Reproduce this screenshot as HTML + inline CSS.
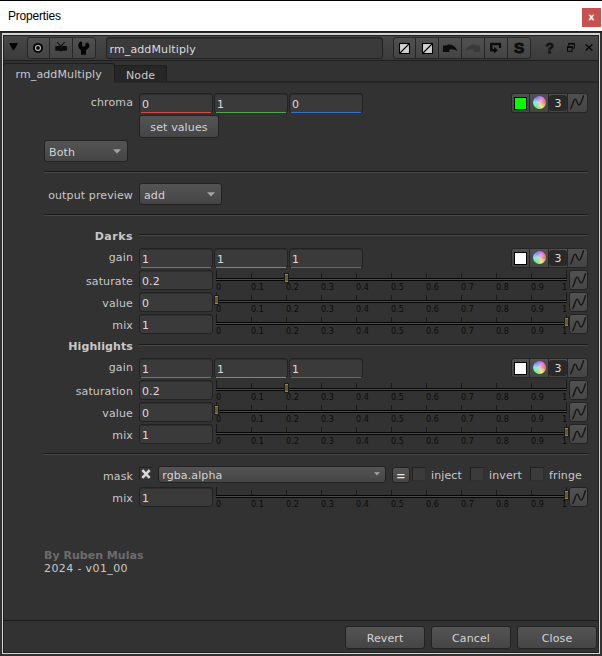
<!DOCTYPE html>
<html><head><meta charset="utf-8"><title>Properties</title>
<style>
*{box-sizing:border-box;margin:0;padding:0}
html,body{width:602px;height:656px;overflow:hidden;background:#323232}
body{position:relative;font-family:"DejaVu Sans","Liberation Sans",sans-serif;font-size:11px;color:#c8c8c8;line-height:13px;letter-spacing:0.12px}
.a{position:absolute}
.t{position:absolute;white-space:nowrap}
.titlebar{left:0;top:0;width:602px;height:31px;background:#fff;border-top:1px solid #000}
.title{left:8px;top:9px;letter-spacing:-0.2px;font-family:"Liberation Sans",sans-serif;font-size:12px;color:#000;line-height:14px}
.close{left:582px;top:8px;width:19px;height:19px;background:#c75050;color:#fff;font-family:"Liberation Sans",sans-serif;font-weight:bold;font-size:9.5px;line-height:18px;text-align:center;letter-spacing:0;-webkit-text-stroke:0.3px #fff}
.shadow{left:0;top:31px;width:602px;height:2px;background:linear-gradient(#1e1e1e,#2a2a2a)}
.frameL{left:2px;top:33px;width:598px;height:621px;border:1px solid #d2d2d2;border-top-width:2px}
.frameD{left:3px;top:35px;width:596px;height:618px;border:1px solid #202020}
.header{left:4px;top:36px;width:594px;height:24px;background:linear-gradient(#484848,#3a3a3a)}
.hline{left:4px;top:60px;width:594px;height:1px;background:#1e1e1e}
.grp{border:1px solid #262626;border-radius:3px;background:linear-gradient(#505050,#444)}
.sep{background:#262626;width:1px}
.tab1{left:3px;top:63px;width:112px;height:20px;border:1px solid #1e1e1e;border-bottom:none;border-radius:3px 3px 0 0;background:#323232}
.tab2{left:114px;top:65px;width:53px;height:17px;border:1px solid #1e1e1e;border-bottom:none;border-radius:0 3px 0 0;background:#262626}
.tabline{left:114px;top:81px;width:484px;height:2px;background:linear-gradient(#232323,#2a2a2a)}
.inp{position:absolute;height:20px;width:74px;background:#3a3a3a;border:1px solid #222;border-radius:3px;color:#dcdcdc;padding:4px 0 0 2px;box-shadow:inset 0 1px 0 #2e2e2e}
.inp i{position:absolute;left:1px;right:1px;bottom:-1px;height:1px}
.lbl{position:absolute;white-space:nowrap;text-align:right;width:120px;left:13px}
.btn{position:absolute;border:1px solid #222;border-radius:3px;background:linear-gradient(#545454,#454545);color:#d4d4d4;text-align:center}
.hr{position:absolute;height:1px;background:#1a1a1a;box-shadow:0 1px 0 #474747}
.tick{position:absolute;width:1px;background:#1a1a1a}
.tl{position:absolute;font-size:8px;line-height:9px;color:#0c0c0c;letter-spacing:0;white-space:nowrap}
.trk{position:absolute;left:216px;width:351px;height:3px;background:#4c4c4c;border-top:1px solid #060606;border-bottom:1px solid #060606}
.hdl{position:absolute;width:5px;height:10px;border:1px solid #1b1b1b;background:linear-gradient(#9c8839 0,#9c8839 1px,#685b2d 1px,#685b2d 7px,#9c8839 7px,#9c8839 8px)}
.cv{position:absolute;width:19px;height:20px;border:1px solid #222;border-radius:3px;background:linear-gradient(#525252,#464646)}
.cb{position:absolute;width:14px;height:14px;background:#3b3b3b;border:1px solid #202020;border-right-color:#303030;border-bottom-color:#303030}
</style></head>
<body>
<div class="a titlebar"></div>
<div class="t title">Properties</div>
<div class="a close">x</div>
<div class="a shadow"></div>
<div class="a frameL"></div>
<div class="a frameD"></div>
<div class="a header"></div>
<div class="a hline"></div>
<svg class="a" style="left:9px;top:43px" width="10" height="8" viewBox="0 0 10 8"><path d="M0 0 H9 L5.2 6.9 H3.8 Z" fill="#000"/></svg>
<div class="a grp" style="left:27px;top:37px;width:69px;height:22px"></div>
<div class="a sep" style="left:49px;top:38px;height:20px"></div>
<div class="a sep" style="left:72px;top:38px;height:20px"></div>
<svg class="a" style="left:32px;top:42px" width="12" height="12" viewBox="0 0 12 12"><circle cx="6" cy="5.9" r="5" fill="#080808"/><circle cx="6" cy="5.9" r="2.45" fill="none" stroke="#bebebe" stroke-width="1.15"/></svg>
<svg class="a" style="left:54px;top:41px" width="15" height="12" viewBox="0 0 15 12"><path d="M3.2 1 L6.9 5.4 L10.6 1.1" fill="none" stroke="#141414" stroke-width="1.15"/><rect x="1.2" y="5" width="11.9" height="4.7" rx="0.9" fill="#0c0c0c"/><path d="M5.6 9.6 L6.9 11.1 L8.2 9.6 Z" fill="#0c0c0c"/></svg>
<svg class="a" style="left:78px;top:41px" width="12" height="15" viewBox="0 0 12 15"><path d="M2.9 0.3 C0.9 1.4 0 3.4 0.2 5.2 C0.5 7.2 2.2 8.2 3 9.2 L3 13.7 L8 13.7 L8 9.2 C8.8 8.2 10.8 7.4 11.3 5.4 C11.6 3.8 10.8 2.4 9.6 1.6 L7.5 2.4 L7.5 4.6 L6.7 5.5 L4.9 5.5 L4.1 4.6 L4.1 1.2 Z" fill="#050505"/></svg>
<div class="inp" style="left:106px;top:37px;width:277px;height:22px;font-size:11px;padding:5px 0 0 2.5px;background:#3a3a3a">rm_addMultiply</div>
<div class="a grp" style="left:393px;top:37px;width:138px;height:22px"></div>
<div class="a sep" style="left:415px;top:38px;height:20px"></div>
<div class="a sep" style="left:438px;top:38px;height:20px"></div>
<div class="a sep" style="left:461px;top:38px;height:20px"></div>
<div class="a sep" style="left:484px;top:38px;height:20px"></div>
<div class="a sep" style="left:507px;top:38px;height:20px"></div>
<svg class="a" style="left:398px;top:42px" width="13" height="13" viewBox="0 0 13 13"><rect x="1.5" y="1.5" width="10" height="10" fill="#d2d2d2" stroke="#000" stroke-width="1.1"/><path d="M2 11 L11 2" stroke="#000" stroke-width="1.1"/></svg>
<svg class="a" style="left:421px;top:42px" width="13" height="13" viewBox="0 0 13 13"><rect x="1.5" y="1.5" width="10" height="10" fill="#d2d2d2" stroke="#000" stroke-width="1.1"/><path d="M2 11 L11 2" stroke="#000" stroke-width="1.1"/></svg>
<svg class="a" style="left:443px;top:44px" width="15" height="9" viewBox="0 0 15 9"><path d="M0 1.4 L0 8.1 L6.9 8.1 L5.7 5.9 C8.5 4.6 12 5.3 14.4 7.3 C13.4 3.4 10 0.2 5.2 0.5 L3.6 1.4 Z" fill="#0c0c0c"/></svg>
<svg class="a" style="left:465px;top:44px;transform:scaleX(-1)" width="15" height="9" viewBox="0 0 15 9"><path d="M0 1.4 L0 8.1 L6.9 8.1 L5.7 5.9 C8.5 4.6 12 5.3 14.4 7.3 C13.4 3.4 10 0.2 5.2 0.5 L3.6 1.4 Z" fill="#3a3a3a"/></svg>
<svg class="a" style="left:489px;top:42px" width="14" height="13" viewBox="0 0 14 13"><path d="M11 6 V2 H2.2 V8.2 H6" fill="none" stroke="#0c0c0c" stroke-width="2.4" stroke-linejoin="round"/><path d="M5 4.7 L8.8 8.2 L5 11.5 Z" fill="#0c0c0c"/></svg>
<div class="t" style="left:514px;top:40px;font-family:'Liberation Sans',sans-serif;font-weight:bold;font-size:14px;line-height:16px;color:#0e0e0e;-webkit-text-stroke:0.9px #0e0e0e;transform:scaleX(1.1);transform-origin:0 0">S</div>
<div class="t" style="left:545.6px;top:40px;font-family:'Liberation Sans',sans-serif;font-weight:bold;font-size:14px;line-height:16px;color:#141414;-webkit-text-stroke:0.8px #141414">?</div>
<svg class="a" style="left:566px;top:42px" width="10" height="11" viewBox="0 0 10 11"><path d="M2.8 3.6 V1.6 H8.4 V6.2 H6.4" fill="none" stroke="#080808" stroke-width="1"/><rect x="2.3" y="0.9" width="6.6" height="1.6" fill="#080808"/><rect x="1.5" y="5" width="4.6" height="4.3" fill="none" stroke="#080808" stroke-width="1"/><rect x="1" y="4.3" width="5.6" height="1.6" fill="#080808"/></svg>
<svg class="a" style="left:585px;top:44px" width="8" height="7" viewBox="0 0 8 7"><path d="M0.6 0.4 L7.4 6.6 M7.4 0.4 L0.6 6.6" stroke="#080808" stroke-width="1.3"/></svg>
<div class="a tabline"></div>
<div class="a tab1"></div>
<div class="a tab2"></div>
<div class="t" style="left:15.5px;top:68px">rm_addMultiply</div>
<div class="t" style="left:126px;top:69px">Node</div>
<div class="lbl" style="top:96px;">chroma</div>
<div class="inp" style="left:139px;top:93px;width:74px">0<i style="background:#d24e4e"></i></div>
<div class="inp" style="left:214px;top:93px;width:74px">1<i style="background:#55a555"></i></div>
<div class="inp" style="left:289px;top:93px;width:74px">0<i style="background:#3a70c2"></i></div>
<div class="a grp" style="left:511px;top:93px;width:77px;height:20px"></div>
<div class="a sep" style="left:529px;top:94px;height:18px"></div>
<div class="a sep" style="left:548px;top:94px;height:18px"></div>
<div class="a sep" style="left:567px;top:94px;height:18px"></div>
<div class="a" style="left:514px;top:97px;width:13px;height:13px;background:#00ff00;border:1px solid #000"></div>
<div class="a" style="left:533px;top:96px;width:13px;height:13px;border-radius:50%;background:radial-gradient(circle at 50% 50%,rgba(214,214,214,1) 0,rgba(214,214,214,0.55) 45%,rgba(214,214,214,0) 100%),conic-gradient(from 90deg,#ff3030,#ffff30,#30ff30,#30ffff,#4040ff,#ff30ff,#ff3030)"></div>
<div class="a" style="left:549px;top:95px;width:18px;height:16px;background:#292929;border-radius:3px;color:#dcdcdc;text-align:center;line-height:18px">3</div>
<div class="a" style="left:568px;top:93px;width:19px;height:20px"><svg class="a" style="left:2px;top:1px" width="15" height="17" viewBox="0 0 15 17"><path d="M0.8 14.6 C2.6 12.4 3.3 5.3 5.1 5.3 C7 5.3 7.2 11.1 9.1 11.1 C11 11.1 12.3 5 13.5 1.8" fill="none" stroke="#1c1818" stroke-width="1.5" stroke-linecap="round"/></svg></div>
<div class="btn" style="left:139px;top:115px;width:80px;height:23px;padding-top:5px">set values</div>
<div class="btn" style="left:44px;top:140px;width:84px;height:22px;text-align:left;padding:5px 0 0 4px">Both<svg class="a" style="right:6.5px;top:7.7px" width="8" height="5" viewBox="0 0 8 5"><path d="M0 0.3 H8 L4.0 4.6 Z" fill="#a4a4a4"/></svg></div>
<div class="hr" style="left:44px;top:171px;width:544px"></div>
<div class="lbl" style="top:189px;">output preview</div>
<div class="btn" style="left:139px;top:183px;width:83px;height:22px;text-align:left;padding:5px 0 0 4px">add<svg class="a" style="right:6.5px;top:7.7px" width="8" height="5" viewBox="0 0 8 5"><path d="M0 0.3 H8 L4.0 4.6 Z" fill="#a4a4a4"/></svg></div>
<div class="hr" style="left:44px;top:214px;width:544px"></div>
<div class="lbl" style="top:230px;font-weight:bold;letter-spacing:0.5px;">Darks</div>
<div class="hr" style="left:139px;top:234px;width:449px"></div>
<div class="lbl" style="top:251px;">gain</div>
<div class="inp" style="left:139px;top:248px;width:74px">1<i style="background:#d24e4e"></i></div>
<div class="inp" style="left:214px;top:248px;width:74px">1<i style="background:#55a555"></i></div>
<div class="inp" style="left:289px;top:248px;width:74px">1<i style="background:#3a70c2"></i></div>
<div class="a grp" style="left:511px;top:248px;width:77px;height:20px"></div>
<div class="a sep" style="left:529px;top:249px;height:18px"></div>
<div class="a sep" style="left:548px;top:249px;height:18px"></div>
<div class="a sep" style="left:567px;top:249px;height:18px"></div>
<div class="a" style="left:514px;top:252px;width:13px;height:13px;background:#fff;border:1px solid #000"></div>
<div class="a" style="left:533px;top:251px;width:13px;height:13px;border-radius:50%;background:radial-gradient(circle at 50% 50%,rgba(214,214,214,1) 0,rgba(214,214,214,0.55) 45%,rgba(214,214,214,0) 100%),conic-gradient(from 90deg,#ff3030,#ffff30,#30ff30,#30ffff,#4040ff,#ff30ff,#ff3030)"></div>
<div class="a" style="left:549px;top:250px;width:18px;height:16px;background:#292929;border-radius:3px;color:#dcdcdc;text-align:center;line-height:18px">3</div>
<div class="a" style="left:568px;top:248px;width:19px;height:20px"><svg class="a" style="left:2px;top:1px" width="15" height="17" viewBox="0 0 15 17"><path d="M0.8 14.6 C2.6 12.4 3.3 5.3 5.1 5.3 C7 5.3 7.2 11.1 9.1 11.1 C11 11.1 12.3 5 13.5 1.8" fill="none" stroke="#1c1818" stroke-width="1.5" stroke-linecap="round"/></svg></div>
<div class="lbl" style="top:275px;">saturate</div>
<div class="inp" style="left:139px;top:270px;width:74px">0.2</div>
<div class="trk" style="top:278px"></div>
<div class="tick" style="left:216px;top:270px;height:8px"></div>
<div class="tl" style="left:216px;top:283px">0</div>
<div class="tick" style="left:251px;top:273px;height:5px"></div>
<div class="tl" style="left:251px;top:283px">0.1</div>
<div class="tick" style="left:286px;top:273px;height:5px"></div>
<div class="tl" style="left:286px;top:283px">0.2</div>
<div class="tick" style="left:321px;top:273px;height:5px"></div>
<div class="tl" style="left:321px;top:283px">0.3</div>
<div class="tick" style="left:356px;top:273px;height:5px"></div>
<div class="tl" style="left:356px;top:283px">0.4</div>
<div class="tick" style="left:391px;top:273px;height:5px"></div>
<div class="tl" style="left:391px;top:283px">0.5</div>
<div class="tick" style="left:426px;top:273px;height:5px"></div>
<div class="tl" style="left:426px;top:283px">0.6</div>
<div class="tick" style="left:461px;top:273px;height:5px"></div>
<div class="tl" style="left:461px;top:283px">0.7</div>
<div class="tick" style="left:496px;top:273px;height:5px"></div>
<div class="tl" style="left:496px;top:283px">0.8</div>
<div class="tick" style="left:531px;top:273px;height:5px"></div>
<div class="tl" style="left:531px;top:283px">0.9</div>
<div class="tick" style="left:566px;top:270px;height:8px"></div>
<div class="tl" style="left:557px;width:10px;text-align:right;top:283px">1</div>
<div class="hdl" style="left:284px;top:273px"></div>
<div class="cv" style="left:569px;top:270px"><svg class="a" style="left:2px;top:1px" width="15" height="17" viewBox="0 0 15 17"><path d="M0.8 14.6 C2.6 12.4 3.3 5.3 5.1 5.3 C7 5.3 7.2 11.1 9.1 11.1 C11 11.1 12.3 5 13.5 1.8" fill="none" stroke="#1c1818" stroke-width="1.5" stroke-linecap="round"/></svg></div>
<div class="lbl" style="top:297px;">value</div>
<div class="inp" style="left:139px;top:292px;width:74px">0</div>
<div class="trk" style="top:300px"></div>
<div class="tick" style="left:216px;top:292px;height:8px"></div>
<div class="tl" style="left:216px;top:305px">0</div>
<div class="tick" style="left:251px;top:295px;height:5px"></div>
<div class="tl" style="left:251px;top:305px">0.1</div>
<div class="tick" style="left:286px;top:295px;height:5px"></div>
<div class="tl" style="left:286px;top:305px">0.2</div>
<div class="tick" style="left:321px;top:295px;height:5px"></div>
<div class="tl" style="left:321px;top:305px">0.3</div>
<div class="tick" style="left:356px;top:295px;height:5px"></div>
<div class="tl" style="left:356px;top:305px">0.4</div>
<div class="tick" style="left:391px;top:295px;height:5px"></div>
<div class="tl" style="left:391px;top:305px">0.5</div>
<div class="tick" style="left:426px;top:295px;height:5px"></div>
<div class="tl" style="left:426px;top:305px">0.6</div>
<div class="tick" style="left:461px;top:295px;height:5px"></div>
<div class="tl" style="left:461px;top:305px">0.7</div>
<div class="tick" style="left:496px;top:295px;height:5px"></div>
<div class="tl" style="left:496px;top:305px">0.8</div>
<div class="tick" style="left:531px;top:295px;height:5px"></div>
<div class="tl" style="left:531px;top:305px">0.9</div>
<div class="tick" style="left:566px;top:292px;height:8px"></div>
<div class="tl" style="left:557px;width:10px;text-align:right;top:305px">1</div>
<div class="hdl" style="left:214px;top:295px"></div>
<div class="cv" style="left:569px;top:292px"><svg class="a" style="left:2px;top:1px" width="15" height="17" viewBox="0 0 15 17"><path d="M0.8 14.6 C2.6 12.4 3.3 5.3 5.1 5.3 C7 5.3 7.2 11.1 9.1 11.1 C11 11.1 12.3 5 13.5 1.8" fill="none" stroke="#1c1818" stroke-width="1.5" stroke-linecap="round"/></svg></div>
<div class="lbl" style="top:319px;">mix</div>
<div class="inp" style="left:139px;top:314px;width:74px">1</div>
<div class="trk" style="top:322px"></div>
<div class="tick" style="left:216px;top:314px;height:8px"></div>
<div class="tl" style="left:216px;top:327px">0</div>
<div class="tick" style="left:251px;top:317px;height:5px"></div>
<div class="tl" style="left:251px;top:327px">0.1</div>
<div class="tick" style="left:286px;top:317px;height:5px"></div>
<div class="tl" style="left:286px;top:327px">0.2</div>
<div class="tick" style="left:321px;top:317px;height:5px"></div>
<div class="tl" style="left:321px;top:327px">0.3</div>
<div class="tick" style="left:356px;top:317px;height:5px"></div>
<div class="tl" style="left:356px;top:327px">0.4</div>
<div class="tick" style="left:391px;top:317px;height:5px"></div>
<div class="tl" style="left:391px;top:327px">0.5</div>
<div class="tick" style="left:426px;top:317px;height:5px"></div>
<div class="tl" style="left:426px;top:327px">0.6</div>
<div class="tick" style="left:461px;top:317px;height:5px"></div>
<div class="tl" style="left:461px;top:327px">0.7</div>
<div class="tick" style="left:496px;top:317px;height:5px"></div>
<div class="tl" style="left:496px;top:327px">0.8</div>
<div class="tick" style="left:531px;top:317px;height:5px"></div>
<div class="tl" style="left:531px;top:327px">0.9</div>
<div class="tick" style="left:566px;top:314px;height:8px"></div>
<div class="tl" style="left:557px;width:10px;text-align:right;top:327px">1</div>
<div class="hdl" style="left:564px;top:317px"></div>
<div class="cv" style="left:569px;top:314px"><svg class="a" style="left:2px;top:1px" width="15" height="17" viewBox="0 0 15 17"><path d="M0.8 14.6 C2.6 12.4 3.3 5.3 5.1 5.3 C7 5.3 7.2 11.1 9.1 11.1 C11 11.1 12.3 5 13.5 1.8" fill="none" stroke="#1c1818" stroke-width="1.5" stroke-linecap="round"/></svg></div>
<div class="lbl" style="top:340px;font-weight:bold;letter-spacing:0.1px;">Highlights</div>
<div class="hr" style="left:139px;top:344px;width:449px"></div>
<div class="lbl" style="top:361px;">gain</div>
<div class="inp" style="left:139px;top:358px;width:74px">1<i style="background:#d24e4e"></i></div>
<div class="inp" style="left:214px;top:358px;width:74px">1<i style="background:#55a555"></i></div>
<div class="inp" style="left:289px;top:358px;width:74px">1<i style="background:#3a70c2"></i></div>
<div class="a grp" style="left:511px;top:358px;width:77px;height:20px"></div>
<div class="a sep" style="left:529px;top:359px;height:18px"></div>
<div class="a sep" style="left:548px;top:359px;height:18px"></div>
<div class="a sep" style="left:567px;top:359px;height:18px"></div>
<div class="a" style="left:514px;top:362px;width:13px;height:13px;background:#fff;border:1px solid #000"></div>
<div class="a" style="left:533px;top:361px;width:13px;height:13px;border-radius:50%;background:radial-gradient(circle at 50% 50%,rgba(214,214,214,1) 0,rgba(214,214,214,0.55) 45%,rgba(214,214,214,0) 100%),conic-gradient(from 90deg,#ff3030,#ffff30,#30ff30,#30ffff,#4040ff,#ff30ff,#ff3030)"></div>
<div class="a" style="left:549px;top:360px;width:18px;height:16px;background:#292929;border-radius:3px;color:#dcdcdc;text-align:center;line-height:18px">3</div>
<div class="a" style="left:568px;top:358px;width:19px;height:20px"><svg class="a" style="left:2px;top:1px" width="15" height="17" viewBox="0 0 15 17"><path d="M0.8 14.6 C2.6 12.4 3.3 5.3 5.1 5.3 C7 5.3 7.2 11.1 9.1 11.1 C11 11.1 12.3 5 13.5 1.8" fill="none" stroke="#1c1818" stroke-width="1.5" stroke-linecap="round"/></svg></div>
<div class="lbl" style="top:385px;">saturation</div>
<div class="inp" style="left:139px;top:380px;width:74px">0.2</div>
<div class="trk" style="top:388px"></div>
<div class="tick" style="left:216px;top:380px;height:8px"></div>
<div class="tl" style="left:216px;top:393px">0</div>
<div class="tick" style="left:251px;top:383px;height:5px"></div>
<div class="tl" style="left:251px;top:393px">0.1</div>
<div class="tick" style="left:286px;top:383px;height:5px"></div>
<div class="tl" style="left:286px;top:393px">0.2</div>
<div class="tick" style="left:321px;top:383px;height:5px"></div>
<div class="tl" style="left:321px;top:393px">0.3</div>
<div class="tick" style="left:356px;top:383px;height:5px"></div>
<div class="tl" style="left:356px;top:393px">0.4</div>
<div class="tick" style="left:391px;top:383px;height:5px"></div>
<div class="tl" style="left:391px;top:393px">0.5</div>
<div class="tick" style="left:426px;top:383px;height:5px"></div>
<div class="tl" style="left:426px;top:393px">0.6</div>
<div class="tick" style="left:461px;top:383px;height:5px"></div>
<div class="tl" style="left:461px;top:393px">0.7</div>
<div class="tick" style="left:496px;top:383px;height:5px"></div>
<div class="tl" style="left:496px;top:393px">0.8</div>
<div class="tick" style="left:531px;top:383px;height:5px"></div>
<div class="tl" style="left:531px;top:393px">0.9</div>
<div class="tick" style="left:566px;top:380px;height:8px"></div>
<div class="tl" style="left:557px;width:10px;text-align:right;top:393px">1</div>
<div class="hdl" style="left:284px;top:383px"></div>
<div class="cv" style="left:569px;top:380px"><svg class="a" style="left:2px;top:1px" width="15" height="17" viewBox="0 0 15 17"><path d="M0.8 14.6 C2.6 12.4 3.3 5.3 5.1 5.3 C7 5.3 7.2 11.1 9.1 11.1 C11 11.1 12.3 5 13.5 1.8" fill="none" stroke="#1c1818" stroke-width="1.5" stroke-linecap="round"/></svg></div>
<div class="lbl" style="top:407px;">value</div>
<div class="inp" style="left:139px;top:402px;width:74px">0</div>
<div class="trk" style="top:410px"></div>
<div class="tick" style="left:216px;top:402px;height:8px"></div>
<div class="tl" style="left:216px;top:415px">0</div>
<div class="tick" style="left:251px;top:405px;height:5px"></div>
<div class="tl" style="left:251px;top:415px">0.1</div>
<div class="tick" style="left:286px;top:405px;height:5px"></div>
<div class="tl" style="left:286px;top:415px">0.2</div>
<div class="tick" style="left:321px;top:405px;height:5px"></div>
<div class="tl" style="left:321px;top:415px">0.3</div>
<div class="tick" style="left:356px;top:405px;height:5px"></div>
<div class="tl" style="left:356px;top:415px">0.4</div>
<div class="tick" style="left:391px;top:405px;height:5px"></div>
<div class="tl" style="left:391px;top:415px">0.5</div>
<div class="tick" style="left:426px;top:405px;height:5px"></div>
<div class="tl" style="left:426px;top:415px">0.6</div>
<div class="tick" style="left:461px;top:405px;height:5px"></div>
<div class="tl" style="left:461px;top:415px">0.7</div>
<div class="tick" style="left:496px;top:405px;height:5px"></div>
<div class="tl" style="left:496px;top:415px">0.8</div>
<div class="tick" style="left:531px;top:405px;height:5px"></div>
<div class="tl" style="left:531px;top:415px">0.9</div>
<div class="tick" style="left:566px;top:402px;height:8px"></div>
<div class="tl" style="left:557px;width:10px;text-align:right;top:415px">1</div>
<div class="hdl" style="left:214px;top:405px"></div>
<div class="cv" style="left:569px;top:402px"><svg class="a" style="left:2px;top:1px" width="15" height="17" viewBox="0 0 15 17"><path d="M0.8 14.6 C2.6 12.4 3.3 5.3 5.1 5.3 C7 5.3 7.2 11.1 9.1 11.1 C11 11.1 12.3 5 13.5 1.8" fill="none" stroke="#1c1818" stroke-width="1.5" stroke-linecap="round"/></svg></div>
<div class="lbl" style="top:429px;">mix</div>
<div class="inp" style="left:139px;top:424px;width:74px">1</div>
<div class="trk" style="top:432px"></div>
<div class="tick" style="left:216px;top:424px;height:8px"></div>
<div class="tl" style="left:216px;top:437px">0</div>
<div class="tick" style="left:251px;top:427px;height:5px"></div>
<div class="tl" style="left:251px;top:437px">0.1</div>
<div class="tick" style="left:286px;top:427px;height:5px"></div>
<div class="tl" style="left:286px;top:437px">0.2</div>
<div class="tick" style="left:321px;top:427px;height:5px"></div>
<div class="tl" style="left:321px;top:437px">0.3</div>
<div class="tick" style="left:356px;top:427px;height:5px"></div>
<div class="tl" style="left:356px;top:437px">0.4</div>
<div class="tick" style="left:391px;top:427px;height:5px"></div>
<div class="tl" style="left:391px;top:437px">0.5</div>
<div class="tick" style="left:426px;top:427px;height:5px"></div>
<div class="tl" style="left:426px;top:437px">0.6</div>
<div class="tick" style="left:461px;top:427px;height:5px"></div>
<div class="tl" style="left:461px;top:437px">0.7</div>
<div class="tick" style="left:496px;top:427px;height:5px"></div>
<div class="tl" style="left:496px;top:437px">0.8</div>
<div class="tick" style="left:531px;top:427px;height:5px"></div>
<div class="tl" style="left:531px;top:437px">0.9</div>
<div class="tick" style="left:566px;top:424px;height:8px"></div>
<div class="tl" style="left:557px;width:10px;text-align:right;top:437px">1</div>
<div class="hdl" style="left:564px;top:427px"></div>
<div class="cv" style="left:569px;top:424px"><svg class="a" style="left:2px;top:1px" width="15" height="17" viewBox="0 0 15 17"><path d="M0.8 14.6 C2.6 12.4 3.3 5.3 5.1 5.3 C7 5.3 7.2 11.1 9.1 11.1 C11 11.1 12.3 5 13.5 1.8" fill="none" stroke="#1c1818" stroke-width="1.5" stroke-linecap="round"/></svg></div>
<div class="hr" style="left:44px;top:453px;width:544px"></div>
<div class="lbl" style="top:470px;">mask</div>
<div class="cb" style="left:139px;top:467px;width:13px;height:13px"></div>
<svg class="a" style="left:141px;top:469px" width="10" height="10" viewBox="0 0 10 10"><path d="M1.4 1.2 L8.6 8.8 M8.6 1.2 L1.4 8.8" stroke="#dadada" stroke-width="2.5"/></svg>
<div class="btn" style="left:158px;top:466px;width:228px;height:17px;text-align:left;padding:2px 0 0 3.2px">rgba.alpha<svg class="a" style="right:5px;top:4.7px" width="6" height="5" viewBox="0 0 6 5"><path d="M0 0.3 H6 L3.0 3.5 Z" fill="#a4a4a4"/></svg></div>
<div class="btn" style="left:392px;top:467px;width:18px;height:16px;font-size:14px;font-weight:normal;line-height:14px;letter-spacing:0;color:#e4e4e4;padding-top:1px"><span style="display:inline-block;transform:scaleX(0.82)">=</span></div>
<div class="cb" style="left:412px;top:467px"></div>
<div class="t" style="left:431px;top:469px">inject</div>
<div class="cb" style="left:470px;top:467px"></div>
<div class="t" style="left:489px;top:469px">invert</div>
<div class="cb" style="left:530px;top:467px"></div>
<div class="t" style="left:549px;top:469px">fringe</div>
<div class="lbl" style="top:492px;">mix</div>
<div class="inp" style="left:139px;top:487px;width:74px">1</div>
<div class="trk" style="top:495px"></div>
<div class="tick" style="left:216px;top:487px;height:8px"></div>
<div class="tl" style="left:216px;top:500px">0</div>
<div class="tick" style="left:251px;top:490px;height:5px"></div>
<div class="tl" style="left:251px;top:500px">0.1</div>
<div class="tick" style="left:286px;top:490px;height:5px"></div>
<div class="tl" style="left:286px;top:500px">0.2</div>
<div class="tick" style="left:321px;top:490px;height:5px"></div>
<div class="tl" style="left:321px;top:500px">0.3</div>
<div class="tick" style="left:356px;top:490px;height:5px"></div>
<div class="tl" style="left:356px;top:500px">0.4</div>
<div class="tick" style="left:391px;top:490px;height:5px"></div>
<div class="tl" style="left:391px;top:500px">0.5</div>
<div class="tick" style="left:426px;top:490px;height:5px"></div>
<div class="tl" style="left:426px;top:500px">0.6</div>
<div class="tick" style="left:461px;top:490px;height:5px"></div>
<div class="tl" style="left:461px;top:500px">0.7</div>
<div class="tick" style="left:496px;top:490px;height:5px"></div>
<div class="tl" style="left:496px;top:500px">0.8</div>
<div class="tick" style="left:531px;top:490px;height:5px"></div>
<div class="tl" style="left:531px;top:500px">0.9</div>
<div class="tick" style="left:566px;top:487px;height:8px"></div>
<div class="tl" style="left:557px;width:10px;text-align:right;top:500px">1</div>
<div class="hdl" style="left:564px;top:490px"></div>
<div class="cv" style="left:569px;top:487px"><svg class="a" style="left:2px;top:1px" width="15" height="17" viewBox="0 0 15 17"><path d="M0.8 14.6 C2.6 12.4 3.3 5.3 5.1 5.3 C7 5.3 7.2 11.1 9.1 11.1 C11 11.1 12.3 5 13.5 1.8" fill="none" stroke="#1c1818" stroke-width="1.5" stroke-linecap="round"/></svg></div>
<div class="t" style="left:44px;top:549px;font-weight:bold;color:#6c6c6c;letter-spacing:0.02px">By Ruben Mulas</div>
<div class="t" style="left:44px;top:562px;letter-spacing:0.38px">2024 - v01_00</div>
<div class="hr" style="left:4px;top:620px;width:594px;box-shadow:none"></div>
<div class="btn" style="left:345px;top:626px;width:80px;height:23px;padding-top:5px">Revert</div>
<div class="btn" style="left:431px;top:626px;width:80px;height:23px;padding-top:5px">Cancel</div>
<div class="btn" style="left:517px;top:626px;width:80px;height:23px;padding-top:5px">Close</div>
</body></html>
